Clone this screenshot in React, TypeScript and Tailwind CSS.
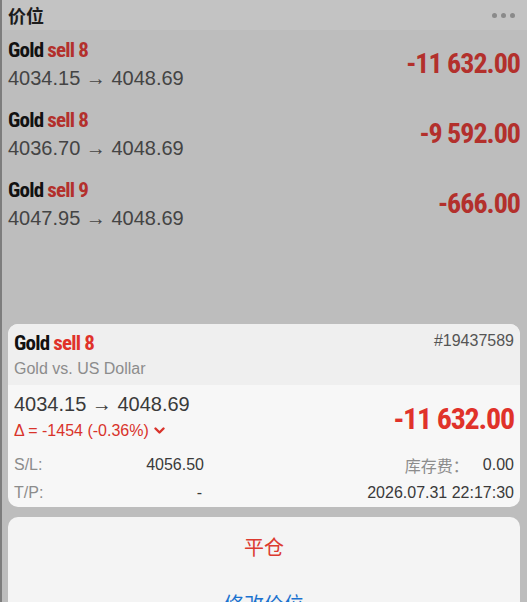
import React from 'react';

const condensed = { fontFamily: 'Roboto, "Liberation Sans", sans-serif', fontStretch: 'condensed' as const };

type Pos = { lots: number; open: string; pl: string };

const posList: Pos[] = [
  { lots: 8, open: '4034.15', pl: '-11 632.00' },
  { lots: 8, open: '4036.70', pl: '-9 592.00' },
  { lots: 9, open: '4047.95', pl: '-666.00' },
];

function PosRow({ p }: { p: Pos }) {
  return (
    <div className="flex h-[70px] items-center justify-between pl-[6px] pr-[7px]">
      <div className="flex flex-col">
        <div className="text-[21px] font-bold leading-[28px] tracking-[-0.8px]" style={condensed}>
          <span className="text-[#111]">Gold</span> <span className="text-[#b3302c]">sell {p.lots}</span>
        </div>
        <div className="text-[20px] leading-[28px] text-[#444]">
          {p.open} → 4048.69
        </div>
      </div>
      <div className="text-[28px] font-bold text-[#b3302c] tracking-[-1px]" style={condensed}>
        {p.pl}
      </div>
    </div>
  );
}

export default function App() {
  return (
    <div
      className="relative h-[602px] w-[527px] overflow-hidden border-l-2 border-[#7d7d7d] bg-[#bdbdbd]"
      style={{ fontFamily: '"Liberation Sans", "Noto Sans CJK SC", sans-serif' }}
    >
      <div className="flex h-[30px] items-center justify-between bg-[#c3c3c3] pl-[6px] pr-[12px]">
        <span className="text-[18px] font-bold text-[#1c1c1c]" style={{ fontFamily: '"Noto Sans CJK SC", sans-serif' }}>价位</span>
        <div className="flex gap-[4px]">
          <span className="h-[5px] w-[5px] rounded-full bg-[#8a8a8a]" />
          <span className="h-[5px] w-[5px] rounded-full bg-[#8a8a8a]" />
          <span className="h-[5px] w-[5px] rounded-full bg-[#8a8a8a]" />
        </div>
      </div>

      <div className="-mt-[1px]">
        {posList.map((p, i) => (
          <PosRow key={i} p={p} />
        ))}
      </div>

      <div className="mt-[85px] ml-[6px] mr-[7px] overflow-hidden rounded-[10px] bg-[#f7f7f7]">
        <div className="h-[61px] bg-[#efefef] px-[6px] pt-[6px]">
          <div className="flex items-start justify-between">
            <div className="text-[21px] font-bold leading-[26px] tracking-[-0.8px]" style={condensed}>
              <span className="text-[#111]">Gold</span> <span className="text-[#e0322a]">sell 8</span>
            </div>
            <span className="text-[16px] leading-[22px] text-[#555]">#19437589</span>
          </div>
          <div className="text-[16px] leading-[26px] text-[#8c8c8c]">Gold vs. US Dollar</div>
        </div>
        <div className="px-[6px] pt-[6px]">
          <div className="flex items-center justify-between">
            <div>
              <div className="text-[20px] leading-[26px] text-[#3a3a3a]">4034.15 → 4048.69</div>
              <div className="flex items-center gap-[5px] text-[16px] leading-[28px] text-[#d9332b]">
                <span>Δ = -1454 (-0.36%)</span>
                <svg width="11" height="8" viewBox="0 0 11 8" fill="none">
                  <path d="M1.5 1.5 L5.5 5.5 L9.5 1.5" stroke="#d9332b" strokeWidth="2.4" strokeLinecap="round" strokeLinejoin="round" />
                </svg>
              </div>
            </div>
            <div className="text-[30px] font-bold text-[#e0322a] tracking-[-1.2px]" style={condensed}>-11 632.00</div>
          </div>
          <div className="mt-[6px] grid grid-cols-[190px_1fr] text-[16px] leading-[28px]">
            <div className="flex justify-between">
              <span className="text-[#8c8c8c]">S/L:</span>
              <span className="text-[#3a3a3a]">4056.50</span>
            </div>
            <div className="flex justify-end">
              <span className="mr-[14px] text-[#8c8c8c]" style={{ fontFamily: '"Noto Sans CJK SC", sans-serif' }}>库存费：</span>
              <span className="text-[#3a3a3a]">0.00</span>
            </div>
            <div className="flex justify-between">
              <span className="text-[#8c8c8c]">T/P:</span>
              <span className="pr-[2px] text-[#3a3a3a]">-</span>
            </div>
            <div className="flex justify-end">
              <span className="text-[#3a3a3a]">2026.07.31 22:17:30</span>
            </div>
          </div>
        </div>
      </div>

      <div className="mt-[10px] ml-[6px] mr-[7px] h-[120px] rounded-t-[10px] bg-[#f4f4f4]" style={{ fontFamily: '"Noto Sans CJK SC", sans-serif' }}>
        <div className="flex h-[60px] items-center justify-center text-[20px] text-[#dc3a30]">平仓</div>
        <div className="flex h-[54px] items-center justify-center text-[20px] text-[#1a72cf]">修改价位</div>
      </div>
    </div>
  );
}
